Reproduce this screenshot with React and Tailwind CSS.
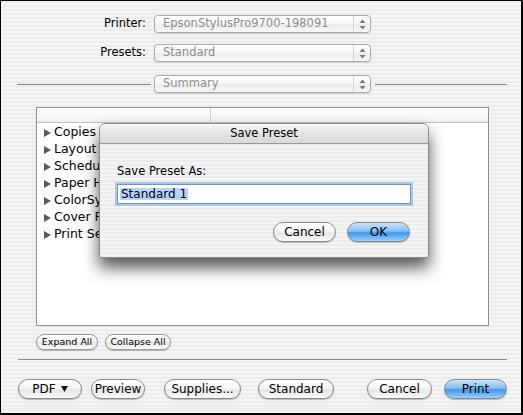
import { useState } from 'react';

const stripes =
  'bg-[repeating-linear-gradient(180deg,#ececec_0px,#ececec_2px,#f4f4f4_2px,#f4f4f4_4px)]';

function Stepper() {
  return (
    <svg width="7" height="11" viewBox="0 0 7 11">
      <path d="M3.5 0.5 L6.5 4 L0.5 4 Z" fill="#7a7a7a" />
      <path d="M3.5 10.5 L6.5 7 L0.5 7 Z" fill="#7a7a7a" />
    </svg>
  );
}

function Popup({ value }) {
  return (
    <div className="flex h-[18px] w-[217px] items-stretch rounded-[4px] border border-[#aaaaaa] bg-[linear-gradient(#ffffff,#f6f6f6_50%,#ececec_50%,#f7f7f7)] shadow-[0_1px_1px_rgba(0,0,0,0.12)]">
      <div className="flex flex-1 items-center pl-[8px] text-[#8d8d8d]">{value}</div>
      <div className="flex w-[17px] items-center justify-center border-l border-[#d4d4d4]">
        <Stepper />
      </div>
    </div>
  );
}

function AquaButton({ children, width, blue = false, small = false }) {
  const base = small
    ? 'h-[16px] text-[9.5px] border-[#9a9a9a]'
    : 'h-[20px] text-[12px] border-[#8a8a8a]';
  const skin = blue
    ? 'border-[#2c5f9e] bg-[linear-gradient(#c9e3fc,#86bff3_45%,#4496ea_55%,#93d3fc)]'
    : 'bg-[linear-gradient(#ffffff,#f7f7f7_45%,#e6e6e6_55%,#fafafa)]';
  return (
    <button
      type="button"
      style={{ width }}
      className={`flex shrink-0 items-center justify-center rounded-full border text-black shadow-[0_1px_1px_rgba(0,0,0,0.25)] ${base} ${skin}`}
    >
      {children}
    </button>
  );
}

function Triangle() {
  return (
    <svg width="7" height="8" viewBox="0 0 7 8" className="shrink-0">
      <path d="M0 0 L7 4 L0 8 Z" fill="#5a5a5a" />
    </svg>
  );
}

export default function App() {
  const [name] = useState('Standard 1');
  const items = ['Copies & Pages', 'Layout', 'Scheduler', 'Paper Handling', 'ColorSync', 'Cover Page', 'Print Settings'];

  return (
    <div
      className={`relative h-[415px] w-[523px] overflow-hidden border-t border-l border-r-2 border-b-2 border-black text-[11.5px] leading-none text-black ${stripes}`}
      style={{ fontFamily: '"DejaVu Sans", Verdana, sans-serif' }}
    >
      {/* printer / presets */}
      <div className="grid grid-cols-[153px_217px] gap-y-[11px] pt-[14px]">
        <div className="flex items-center justify-end pr-[8px]">Printer:</div>
        <Popup value="EpsonStylusPro9700-198091" />
        <div className="flex items-center justify-end pr-[8px]">Presets:</div>
        <Popup value="Standard" />
      </div>

      {/* pane selector */}
      <div className="mt-[13px] flex items-center pl-[16px] pr-[14px]">
        <div className="h-px w-[134px] bg-[#8a8a8a]" />
        <div className="ml-[3px]">
          <Popup value="Summary" />
        </div>
        <div className="ml-[4px] h-px flex-1 bg-[#8a8a8a]" />
      </div>

      {/* summary list */}
      <div className="ml-[35px] mt-[14px] flex h-[219px] w-[453px] flex-col border border-[#8e8e8e] bg-white">
        <div className="flex h-[15px] shrink-0 border-b border-[#c2c2c2] bg-[linear-gradient(#ffffff,#f1f1f1)]">
          <div className="w-[174px] border-r border-[#d0d0d0]" />
          <div className="flex-1" />
        </div>
        <div className="flex flex-col pt-[1px]">
          {items.map((item) => (
            <div key={item} className="flex h-[17px] items-center gap-[3px] pl-[7px] text-[12.5px]">
              <Triangle />
              <span>{item}</span>
            </div>
          ))}
        </div>
      </div>

      <div className="ml-[35px] mt-[8px] flex gap-[7px]">
        <AquaButton small width={62}>Expand All</AquaButton>
        <AquaButton small width={66}>Collapse All</AquaButton>
      </div>

      <div className="ml-[17px] mr-[14px] mt-[9px] h-px bg-[#8a8a8a]" />

      <div className="ml-[17px] mt-[19px] flex">
        <AquaButton width={64}>
          <span>PDF</span>
          <svg width="7" height="6" viewBox="0 0 7 6" className="ml-[5px]">
            <path d="M0 0 L7 0 L3.5 6 Z" fill="#111" />
          </svg>
        </AquaButton>
        <div className="ml-[9px]"><AquaButton width={54}>Preview</AquaButton></div>
        <div className="ml-[19px]"><AquaButton width={77}>Supplies...</AquaButton></div>
        <div className="ml-[17px]"><AquaButton width={76}>Standard</AquaButton></div>
        <div className="ml-[33px]"><AquaButton width={65}>Cancel</AquaButton></div>
        <div className="ml-[12px]"><AquaButton blue width={63}>Print</AquaButton></div>
      </div>

      {/* Save Preset sheet */}
      <div
        className={`absolute left-[98px] top-[122px] flex h-[135px] w-[330px] flex-col rounded-t-[6px] border border-[#8c8c8c] shadow-[0_10px_16px_rgba(0,0,0,0.65)] ${stripes}`}
      >
        <div className="flex h-[20px] shrink-0 items-center justify-center rounded-t-[6px] border-b border-[#9a9a9a] bg-[linear-gradient(#f7f7f7,#e4e4e4_50%,#d9d9d9)]">
          Save Preset
        </div>
        <div className="flex flex-col px-[17px] pt-[20px]">
          <div className="h-[14px] leading-[14px]">Save Preset As:</div>
          <div className="mt-[6px] flex h-[20px] items-center border border-[#6f94c4] bg-white pl-[2px] text-[12px] shadow-[0_0_0_2px_#aac7ec]">
            <span className="bg-[#b5d5ff] px-px">{name}</span>
          </div>
          <div className="mt-[18px] flex justify-end gap-[11px] pr-px">
            <AquaButton width={63}>Cancel</AquaButton>
            <AquaButton blue width={63}>OK</AquaButton>
          </div>
        </div>
      </div>
    </div>
  );
}
